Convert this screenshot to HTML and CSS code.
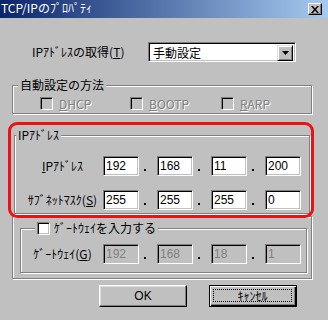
FILE: index.html
```html
<!DOCTYPE html>
<html lang="ja">
<head>
<meta charset="utf-8">
<title>TCP/IPのプロパティ</title>
<link rel="stylesheet" href="styles.css">
</head>
<body>
<div class="window">
  <div class="titlebar">
    <span class="title">TCP/IPのﾌﾟﾛﾊﾟﾃｨ</span>
    <span class="close"><svg width="8" height="7" viewBox="0 0 8 7"><path d="M0 0h2l2 2.5 2-2.5h2l-3 3.5 3 3.5h-2l-2-2.5-2 2.5h-2l3-3.5z" fill="#000"/></svg></span>
  </div>
  <div class="content">
    <div class="obtain">
      <span class="obtain-label">IPｱﾄﾞﾚｽの取得(<u>T</u>)</span>
      <div class="select">
        <span class="select-text">手動設定</span>
        <span class="dd-btn"><svg width="7" height="4" viewBox="0 0 7 4"><path d="M0 0h7l-3.5 4z" fill="#000"/></svg></span>
      </div>
    </div>

    <fieldset class="group auto">
      <legend>自動設定の方法</legend>
      <div class="checks">
        <span class="chk"><span class="box off"></span><span class="dis"><u>D</u>HCP</span></span>
        <span class="chk"><span class="box off"></span><span class="dis"><u>B</u>OOTP</span></span>
        <span class="chk"><span class="box off"></span><span class="dis"><u>R</u>ARP</span></span>
      </div>
    </fieldset>

    <div class="ip-area">
      <fieldset class="group ip">
        <legend>IPｱﾄﾞﾚｽ</legend>
        <div class="addr-row">
          <span class="addr-label"><u>I</u>Pｱﾄﾞﾚｽ</span>
          <span class="field">192</span><span class="dot"></span>
          <span class="field">168</span><span class="dot"></span>
          <span class="field">11</span><span class="dot"></span>
          <span class="field">200</span>
        </div>
        <div class="addr-row second">
          <span class="addr-label">ｻﾌﾞﾈｯﾄﾏｽｸ(<u>S</u>)</span>
          <span class="field">255</span><span class="dot"></span>
          <span class="field">255</span><span class="dot"></span>
          <span class="field">255</span><span class="dot"></span>
          <span class="field">0</span>
        </div>
      </fieldset>
      <div class="annot"></div>
    </div>

    <div class="gw-outer">
      <fieldset class="group gw">
        <legend><span class="box"></span><span class="gw-check-text">ｹﾞｰﾄｳｪｲを入力する</span></legend>
        <div class="addr-row">
          <span class="addr-label">ｹﾞｰﾄｳｪｲ(<u>G</u>)</span>
          <span class="field disabled">192</span><span class="dot"></span>
          <span class="field disabled">168</span><span class="dot"></span>
          <span class="field disabled">18</span><span class="dot"></span>
          <span class="field disabled">1</span>
        </div>
      </fieldset>
    </div>

    <div class="buttons">
      <span class="btn">OK</span>
      <span class="btn default"><span class="focus">ｷｬﾝｾﾙ</span></span>
    </div>
  </div>
</div>
</body>
</html>
```

FILE: styles.css
```css
* { box-sizing: border-box; }
html, body { margin: 0; padding: 0; }
body {
  width: 328px;
  height: 320px;
  overflow: hidden;
  background: #c0c0c0;
  font-family: "Noto Sans CJK JP", "Noto Sans", sans-serif;
  font-size: 12px;
  color: #000;
}
u { text-decoration: underline; text-underline-offset: 1px; }

.window { width: 328px; height: 320px; }

.titlebar {
  height: 18px;
  display: flex;
  align-items: flex-start;
  justify-content: space-between;
  padding: 0 6px 0 1px;
  background: linear-gradient(to right, #0a246a, #a6caf0);
}
.title { color: #fff; line-height: 16px; }
.close {
  margin-top: 3px;
  width: 14px;
  height: 12px;
  display: flex;
  align-items: center;
  justify-content: center;
  background: #c0c0c0;
  border: 1px solid;
  border-color: #fff #000 #000 #fff;
  box-shadow: inset -1px -1px 0 #808080;
}

.obtain {
  margin-top: 24px;
  padding-left: 32px;
  display: flex;
  align-items: center;
  height: 20px;
}
.obtain-label { width: 116px; line-height: 14px; }
.select {
  width: 148px;
  height: 20px;
  display: flex;
  justify-content: space-between;
  background: #fff;
  border: 1px solid;
  border-color: #808080 #fff #fff #808080;
  box-shadow: inset 1px 1px 0 #000, inset -1px -1px 0 #c0c0c0;
  padding: 2px;
}
.select-text { padding-left: 2px; line-height: 16px; }
.dd-btn {
  width: 16px;
  height: 16px;
  display: flex;
  align-items: center;
  justify-content: center;
  background: #c0c0c0;
  border: 1px solid;
  border-color: #dfdfdf #000 #000 #dfdfdf;
  box-shadow: inset 1px 1px 0 #fff, inset -1px -1px 0 #808080;
}

.group {
  margin: 0;
  padding: 0;
  min-width: 0;
  border: 1px solid #808080;
  box-shadow: inset 1px 1px 0 #fff, 1px 1px 0 #fff;
}
.group legend {
  line-height: 14px;
  padding: 0 2px;
  margin-left: 5px;
  background: #c0c0c0;
}

.auto {
  margin: 16px 16px 0 12px;
  padding: 5px 0 3px 0;
}
.checks {
  margin-left: 27px;
  display: grid;
  grid-template-columns: 90px 91px auto;
  height: 13px;
}
.chk { display: flex; align-items: center; height: 13px; }
.chk .dis { margin-left: 6px; line-height: 13px; }
.dis {
  color: #808080;
  text-shadow: 1px 1px 0 #fff;
}
.dis u { text-decoration-color: #808080; }

.box {
  width: 13px;
  height: 13px;
  flex: none;
  background: #fff;
  border: 1px solid;
  border-color: #808080 #fff #fff #808080;
  box-shadow: inset 1px 1px 0 #000, inset -1px -1px 0 #c0c0c0;
}
.box.off { background: #c0c0c0; }

.ip-area { position: relative; }
.ip {
  margin: 14px 18px 0 14px;
  padding: 14px 0 3px 0;
}
.ip legend { margin-left: 1px; }
.ip .addr-row { margin-left: 7px; }
.annot {
  position: absolute;
  left: 8px;
  top: -6px;
  width: 306px;
  height: 96px;
  border: 3px solid #ee1111;
  border-radius: 9px;
  pointer-events: none;
}

.addr-row {
  display: flex;
  align-items: center;
  height: 20px;
}
.addr-row.second { margin-top: 14px; }
.addr-label {
  width: 81px;
  text-align: center;
  line-height: 14px;
  white-space: nowrap;
}
.field {
  width: 36px;
  height: 20px;
  background: #fff;
  border: 1px solid;
  border-color: #808080 #fff #fff #808080;
  box-shadow: inset 1px 1px 0 #000, inset -1px -1px 0 #c0c0c0;
  font-family: "Liberation Sans", Arial, sans-serif;
  font-size: 12px;
  line-height: 18px;
  padding-left: 2px;
}
.field.disabled { background: #c0c0c0; color: #808080; }
.dot {
  width: 18px;
  height: 20px;
  position: relative;
}
.dot::after {
  content: "";
  position: absolute;
  left: 5px;
  top: 13px;
  width: 2px;
  height: 2px;
  background: #000;
}

.gw-outer {
  margin: 2px 16px 0 12px;
  border: 1px solid #808080;
  box-shadow: inset 1px 1px 0 #fff, 1px 1px 0 #fff;
  padding: 5px 4px 5px 7px;
}
.gw { padding: 10px 0 8px 0; }
.gw .addr-row { margin-left: 1px; }
.gw legend {
  display: flex;
  align-items: center;
  height: 12px;
  line-height: 12px;
  margin-left: 14px;
  padding: 0 2px;
}
.gw-check-text { margin-left: 4px; line-height: 12px; }

.buttons {
  margin-top: 6px;
  padding-left: 99px;
  display: flex;
  gap: 22px;
}
.btn {
  width: 88px;
  height: 22px;
  display: flex;
  align-items: center;
  justify-content: center;
  background: #c0c0c0;
  border: 1px solid;
  border-color: #fff #000 #000 #fff;
  box-shadow: inset -1px -1px 0 #808080, inset 1px 1px 0 #dfdfdf;
  font-family: "Liberation Sans", "Noto Sans CJK JP", sans-serif;
  line-height: 14px;
}
.btn.default {
  border-color: #000;
  box-shadow: inset 1px 1px 0 #fff, inset -1px -1px 0 #000, inset -2px -2px 0 #808080;
  padding: 3px 4px 4px 3px;
}
.focus {
  flex: 1;
  align-self: stretch;
  display: flex;
  align-items: center;
  justify-content: center;
  border: 1px dotted #000;
  font-family: "Noto Sans CJK JP", sans-serif;
}
```
